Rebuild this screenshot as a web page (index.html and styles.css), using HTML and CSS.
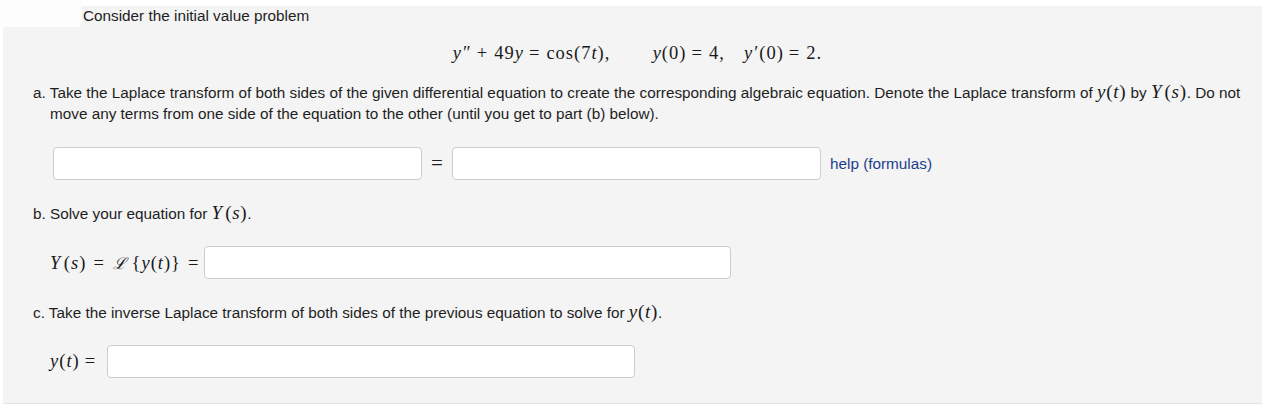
FILE: index.html
```html
<!DOCTYPE html>
<html>
<head>
<meta charset="utf-8">
<link rel="stylesheet" href="styles.css">
</head>
<body>
<div class="blot"></div>
<div class="panel">
  <p class="intro">Consider the initial value problem</p>
  <p class="display">
    <span class="m"><i>y</i><span class="pr">″</span><span class="op">+</span>49<i>y</i><span class="op">=</span>cos(7<i>t</i>),</span>
    <span class="m sp1"><i>y</i>(0)<span class="op">=</span>4,</span>
    <span class="m sp2"><i>y</i><span class="pr">′</span>(0)<span class="op">=</span>2.</span>
  </p>
  <p class="part">a. Take the Laplace transform of both sides of the given differential equation to create the corresponding algebraic equation. Denote the Laplace transform of <span class="mi"><i>y</i>(<i>t</i>)</span> by <span class="mi"><i>Y</i>&#8202;(<i>s</i>)</span>. Do not<br>move any terms from one side of the equation to the other (until you get to part (b) below).</p>
  <div class="row row-a">
    <input class="field f-a" type="text">
    <span class="m eq">=</span>
    <input class="field f-a" type="text">
    <a class="help" href="#">help (formulas)</a>
  </div>
  <p class="part part-b">b. Solve your equation for <span class="mi"><i>Y</i>&#8202;(<i>s</i>)</span>.</p>
  <div class="row row-b">
    <span class="m lbl"><i>Y</i>&#8202;(<i>s</i>)<span class="op">=</span><span class="cal">ℒ</span>&#8201;{<i>y</i>(<i>t</i>)}<span class="op">=</span></span>
    <input class="field f-b" type="text">
  </div>
  <p class="part part-c">c. Take the inverse Laplace transform of both sides of the previous equation to solve for <span class="mi"><i>y</i>(<i>t</i>)</span>.</p>
  <div class="row row-c">
    <span class="m lbl"><i>y</i>(<i>t</i>)<span class="op">=</span></span>
    <input class="field f-c" type="text">
  </div>
</div>
</body>
</html>
```

FILE: styles.css
```css
html, body {
  margin: 0;
  padding: 0;
  background: #ffffff;
}
body {
  font-family: "Liberation Sans", Arial, sans-serif;
  font-size: 15.3px;
  color: #1e1e1e;
  position: relative;
}
.blot {
  position: absolute;
  left: 0;
  top: 0;
  width: 82px;
  height: 27px;
  background: #fdfdfd;
  border-bottom-right-radius: 6px;
}
.panel {
  margin: 6px 0 0 3px;
  background: #f4f4f4;
  padding: 0 4px 25px 30px;
  border-bottom: 1px solid #e4e4e4;
  white-space: nowrap;
}
p {
  margin: 0;
}
.intro {
  margin-left: 50px;
  line-height: 20px;
}
.m {
  font-family: "Liberation Serif", "Times New Roman", serif;
  font-size: 18.5px;
  color: #1a1a1a;
  letter-spacing: 1px;
}
.m i, .mi i {
  font-style: italic;
}
.pr {
  margin-left: 1px;
}
.op {
  margin: 0 6px 0 5px;
}
.mi {
  font-family: "Liberation Serif", "Times New Roman", serif;
  font-size: 19px;
  color: #1a1a1a;
  letter-spacing: 0.7px;
}
.display {
  text-align: center;
  margin-top: 17px;
  line-height: 20px;
  padding-right: 16px;
}
.sp1 {
  margin-left: 38px;
}
.sp2 {
  margin-left: 15px;
}
.part {
  margin-top: 17px;
  line-height: 21px;
  padding-left: 17px;
  text-indent: -17px;
}
.row {
  display: flex;
  align-items: center;
  margin-left: 20px;
  margin-top: 23px;
}
.field {
  box-sizing: border-box;
  height: 33px;
  border: 1px solid #cccccc;
  border-radius: 4px;
  background: #ffffff;
  margin: 0;
  padding: 0 6px;
}
.f-a {
  width: 369px;
}
.eq {
  width: 30px;
  text-align: center;
  color: #222;
  font-size: 21px;
  letter-spacing: 0;
}
.help {
  margin-left: 9px;
  color: #1b3f8b;
  text-decoration: none;
}
.part-b {
  margin-top: 22px;
}
.row-b {
  margin-left: 17px;
  margin-top: 22px;
}
.row-b .op {
  margin: 0 8px 0 7px;
}
.lbl .op:last-child {
  margin-right: 0;
}
.row-b .lbl {
  margin-right: 5px;
}
.row-c .lbl {
  margin-right: 11px;
}
.cal {
  font-family: "DejaVu Serif", serif;
  font-style: italic;
  font-size: 16px;
}
.f-b {
  width: 527px;
}
.part-c {
  margin-top: 22px;
}
.row-c {
  margin-left: 17px;
  margin-top: 22px;
}
.f-c {
  width: 528px;
}
```
